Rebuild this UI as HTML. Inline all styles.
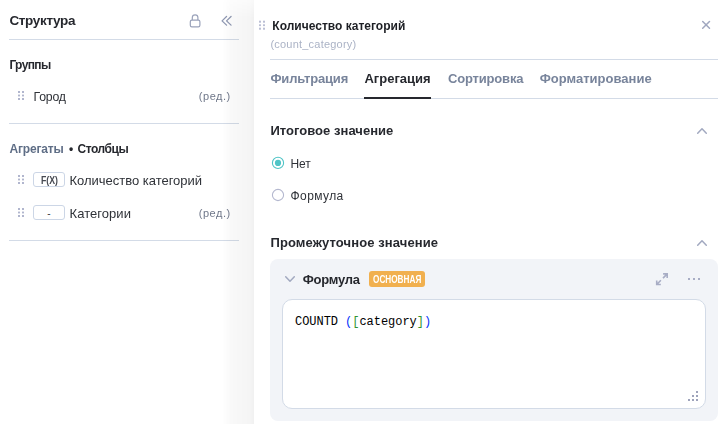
<!DOCTYPE html>
<html lang="ru">
<head>
<meta charset="utf-8">
<title>Структура</title>
<style>
html,body{margin:0;padding:0;}
body{width:725px;height:424px;overflow:hidden;background:#fff;position:relative;font-family:"Liberation Sans",sans-serif;}
.t{position:absolute;white-space:nowrap;}
.gl{position:absolute;left:0;top:0;width:725px;height:424px;will-change:transform;}
.abs{position:absolute;}
.hr{position:absolute;height:1px;background:#d3dbe7;}
.shadow{position:absolute;left:222px;top:0;width:32px;height:424px;background:linear-gradient(to right,rgba(0,0,0,0) 0%,rgba(0,0,0,0.006) 10%,rgba(0,0,0,0.022) 28%,rgba(0,0,0,0.03) 55%,rgba(0,0,0,0.04) 85%,rgba(0,0,0,0.06) 100%);-webkit-mask-image:linear-gradient(to bottom,rgba(0,0,0,0.45) 0,#000 18px);mask-image:linear-gradient(to bottom,rgba(0,0,0,0.45) 0,#000 18px);}
.panel{position:absolute;left:254px;top:0;width:471px;height:424px;background:#fff;border-top-left-radius:3px;}
.badge{position:absolute;left:33px;width:32px;height:15px;box-sizing:border-box;border:1px solid #ccd6e6;border-radius:3px;background:#fff;}
.graybox{position:absolute;left:270px;top:259px;width:448px;height:162px;background:#f2f4f8;border-radius:8px;}
.whitebox{position:absolute;left:282px;top:299px;width:424px;height:110px;box-sizing:border-box;background:#fff;border:1px solid #d3dbe7;border-radius:10px;}
.obadge{position:absolute;left:369px;top:271px;width:56px;height:16px;background:#f1b04f;border-radius:3px;}
svg{position:absolute;overflow:visible;}
</style>
</head>
<body>
<!-- left panel -->
<div class="hr" style="left:9px;top:39px;width:230px"></div>
<div class="hr" style="left:9px;top:123px;width:230px"></div>
<div class="hr" style="left:9px;top:240px;width:230px"></div>
<div class="badge" style="top:172px"></div>
<div class="badge" style="top:205px"></div>

<!-- drag handles -->
<svg width="725" height="424" style="left:0;top:0" fill="#b1b6ce">
 <rect x="18" y="91" width="2" height="2"/><rect x="22" y="91" width="2" height="2"/><rect x="18" y="94.6" width="2" height="1.8"/><rect x="22" y="94.6" width="2" height="1.8"/><rect x="18" y="98" width="2" height="2"/><rect x="22" y="98" width="2" height="2"/>
 <rect x="18" y="175" width="2" height="2"/><rect x="22" y="175" width="2" height="2"/><rect x="18" y="178.6" width="2" height="1.8"/><rect x="22" y="178.6" width="2" height="1.8"/><rect x="18" y="182" width="2" height="2"/><rect x="22" y="182" width="2" height="2"/>
 <rect x="18" y="208" width="2" height="2"/><rect x="22" y="208" width="2" height="2"/><rect x="18" y="211.6" width="2" height="1.8"/><rect x="22" y="211.6" width="2" height="1.8"/><rect x="18" y="215" width="2" height="2"/><rect x="22" y="215" width="2" height="2"/>
</svg>

<!-- lock icon -->
<svg width="14" height="16" style="left:188px;top:13px" fill="none" stroke="#9aa2ba" stroke-width="1.2">
 <rect x="2.3" y="7.1" width="9.6" height="6.8" rx="1.6"/>
 <path d="M4.3 7.1V4.6a2.8 2.8 0 0 1 5.6 0V7.1"/>
</svg>
<!-- double chevron -->
<svg width="14" height="12" style="left:220px;top:15px" fill="none" stroke="#8f98b2" stroke-width="1.3" stroke-linecap="round" stroke-linejoin="round">
 <path d="M6.55 1.55L2.05 5.85 6.55 10.15"/><path d="M11.05 1.55L6.55 5.85 11.05 10.15"/>
</svg>

<div class="shadow"></div>
<div class="panel"></div>

<!-- right panel -->
<svg width="725" height="424" style="left:0;top:0" fill="#bbbfd5">
 <rect x="259" y="20.7" width="2" height="2"/><rect x="263" y="20.7" width="2" height="2"/><rect x="259" y="24.3" width="2" height="1.8"/><rect x="263" y="24.3" width="2" height="1.8"/><rect x="259" y="27.7" width="2" height="2"/><rect x="263" y="27.7" width="2" height="2"/>
</svg>
<div class="hr" style="left:270px;top:59px;width:448px"></div>
<div class="hr" style="left:270px;top:98px;width:448px"></div>
<div class="abs" style="left:364px;top:97px;width:67px;height:2px;background:#26282e"></div>

<!-- close -->
<svg width="10" height="10" style="left:701px;top:20px" fill="none" stroke="#a0a7bf" stroke-width="1.5" stroke-linecap="round">
 <path d="M1.7 1.5L8.5 8.3M8.5 1.5L1.7 8.3"/>
</svg>
<!-- chevrons up -->
<svg width="12" height="8" style="left:696px;top:127px" fill="none" stroke="#a2a9c0" stroke-width="1.5" stroke-linecap="round" stroke-linejoin="round">
 <path d="M1.7 6.3L6 1.8 10.3 6.3"/>
</svg>
<svg width="12" height="8" style="left:696px;top:239px" fill="none" stroke="#a2a9c0" stroke-width="1.5" stroke-linecap="round" stroke-linejoin="round">
 <path d="M1.7 6.3L6 1.8 10.3 6.3"/>
</svg>

<!-- radios -->
<svg width="14" height="14" style="left:271px;top:156px">
 <circle cx="7" cy="6.9" r="5.6" fill="#fff" stroke="#4fc4c6" stroke-width="1.1"/>
 <circle cx="7" cy="6.9" r="3.1" fill="#4fc4c6"/>
</svg>
<svg width="14" height="14" style="left:271px;top:188px">
 <circle cx="7" cy="7" r="5.6" fill="#fff" stroke="#b4b8cf" stroke-width="1.1"/>
</svg>

<div class="graybox"></div>
<div class="whitebox"></div>
<div class="obadge"></div>

<!-- chevron down -->
<svg width="12" height="8" style="left:284px;top:275px" fill="none" stroke="#a2a9c0" stroke-width="1.5" stroke-linecap="round" stroke-linejoin="round">
 <path d="M1.7 1.7L6 6.2 10.3 1.7"/>
</svg>
<!-- expand icon -->
<svg width="14" height="14" style="left:655px;top:272px" fill="none" stroke="#a8adc5" stroke-width="1.6" stroke-linejoin="miter">
 <path d="M8.1 1.9H12.2V6M12.2 1.9L8 6.1"/>
 <path d="M1.7 8.4V12.5H5.8M1.7 12.5L5.9 8.3"/>
</svg>
<!-- dots -->
<svg width="14" height="4" style="left:688px;top:278px" fill="#a8adc5">
 <rect x="0" y="0" width="2" height="2"/><rect x="5" y="0" width="2" height="2"/><rect x="10" y="0" width="2" height="2"/>
</svg>
<!-- resize grip -->
<svg width="12" height="12" style="left:688px;top:391px" fill="#9ea3bb">
 <rect x="8" y="0" width="2" height="2"/>
 <rect x="4" y="4" width="2" height="2"/><rect x="8" y="4" width="2" height="2"/>
 <rect x="0" y="8" width="2" height="2"/><rect x="4" y="8" width="2" height="2"/><rect x="8" y="8" width="2" height="2"/>
</svg>

<div class="t" id="t6" style="left:40.6px;top:176.02px;font:bold 10px/1 'Liberation Sans', sans-serif;color:#474a52;transform:scaleX(0.8739);transform-origin:0 0">F(X)</div>
<div class="t" id="t8" style="left:47.2px;top:209.02px;font:normal 10px/1 'Liberation Sans', sans-serif;color:#3a3d45;letter-spacing:0.156px">-</div>
<div class="t" id="t23" style="left:295.0px;top:316.01px;font:normal 12px/1 'Liberation Mono', monospace;color:#000000;letter-spacing:-0.044px">COUNTD <span style="color:#0431fa">(</span><span style="color:#319331">[</span>category<span style="color:#319331">]</span><span style="color:#0431fa">)</span></div>
<div class="gl">
<div class="t" id="t1" style="left:9.4px;top:14.01px;font:bold 13.5px/1 'Liberation Sans', sans-serif;color:#26282e;letter-spacing:-0.326px">Структура</div>
<div class="t" id="t2" style="left:9.4px;top:59.01px;font:bold 12px/1 'Liberation Sans', sans-serif;color:#26282e;letter-spacing:-0.623px">Группы</div>
<div class="t" id="t3" style="left:33.5px;top:91.01px;font:normal 12.3px/1 'Liberation Sans', sans-serif;color:#2f3238;letter-spacing:-0.193px">Город</div>
<div class="t" id="t4" style="left:198.8px;top:91.00px;font:normal 11px/1 'Liberation Sans', sans-serif;color:#70788a;letter-spacing:0.534px">(ред.)</div>
<div class="t" id="t5" style="left:9.4px;top:143.01px;font:bold 12px/1 'Liberation Sans', sans-serif;color:#5f6e86;letter-spacing:-0.146px">Агрегаты</div>
<div class="t" id="t5b" style="left:68.9px;top:143.01px;font:bold 12px/1 'Liberation Sans', sans-serif;color:#26282e;letter-spacing:-0.003px">•</div>
<div class="t" id="t5c" style="left:77.5px;top:143.01px;font:bold 12px/1 'Liberation Sans', sans-serif;color:#26282e;letter-spacing:-0.446px">Столбцы</div>
<div class="t" id="t7" style="left:69.5px;top:174.00px;font:normal 13px/1 'Liberation Sans', sans-serif;color:#2f3238;letter-spacing:-0.016px">Количество категорий</div>
<div class="t" id="t9" style="left:69.5px;top:207.00px;font:normal 13px/1 'Liberation Sans', sans-serif;color:#2f3238;letter-spacing:0.056px">Категории</div>
<div class="t" id="t10" style="left:198.7px;top:208.00px;font:normal 11px/1 'Liberation Sans', sans-serif;color:#70788a;letter-spacing:0.534px">(ред.)</div>
<div class="t" id="t11" style="left:272.3px;top:20.01px;font:bold 12px/1 'Liberation Sans', sans-serif;color:#1d1f24;letter-spacing:0.012px">Количество категорий</div>
<div class="t" id="t12" style="left:270.4px;top:39.00px;font:normal 11px/1 'Liberation Sans', sans-serif;color:#abb3c6;letter-spacing:0.216px">(count_category)</div>
<div class="t" id="t13" style="left:270.4px;top:72.00px;font:bold 13px/1 'Liberation Sans', sans-serif;color:#78849b;letter-spacing:-0.161px">Фильтрация</div>
<div class="t" id="t14" style="left:364.4px;top:72.00px;font:bold 13px/1 'Liberation Sans', sans-serif;color:#26282e;letter-spacing:0.012px">Агрегация</div>
<div class="t" id="t15" style="left:448px;top:72.00px;font:bold 13px/1 'Liberation Sans', sans-serif;color:#78849b;letter-spacing:-0.178px">Сортировка</div>
<div class="t" id="t16" style="left:539.7px;top:72.00px;font:bold 13px/1 'Liberation Sans', sans-serif;color:#78849b;letter-spacing:0.010px">Форматирование</div>
<div class="t" id="t17" style="left:270.4px;top:124.00px;font:bold 13px/1 'Liberation Sans', sans-serif;color:#26282e;letter-spacing:0.039px">Итоговое значение</div>
<div class="t" id="t18" style="left:290.6px;top:158.01px;font:normal 12px/1 'Liberation Sans', sans-serif;color:#2f3238;letter-spacing:-0.146px">Нет</div>
<div class="t" id="t19" style="left:290.6px;top:190.01px;font:normal 12px/1 'Liberation Sans', sans-serif;color:#2f3238;letter-spacing:0.388px">Формула</div>
<div class="t" id="t20" style="left:270.5px;top:236.00px;font:bold 13px/1 'Liberation Sans', sans-serif;color:#26282e;letter-spacing:0.104px">Промежуточное значение</div>
<div class="t" id="t21" style="left:302.7px;top:273.00px;font:bold 13px/1 'Liberation Sans', sans-serif;color:#26282e;letter-spacing:-0.259px">Формула</div>
<div class="t" id="t22" style="left:372.7px;top:275.01px;font:bold 10.2px/1 'Liberation Sans', sans-serif;color:#ffffff;transform:scaleX(0.8054);transform-origin:0 0">ОСНОВНАЯ</div>
</div>
</body>
</html>
